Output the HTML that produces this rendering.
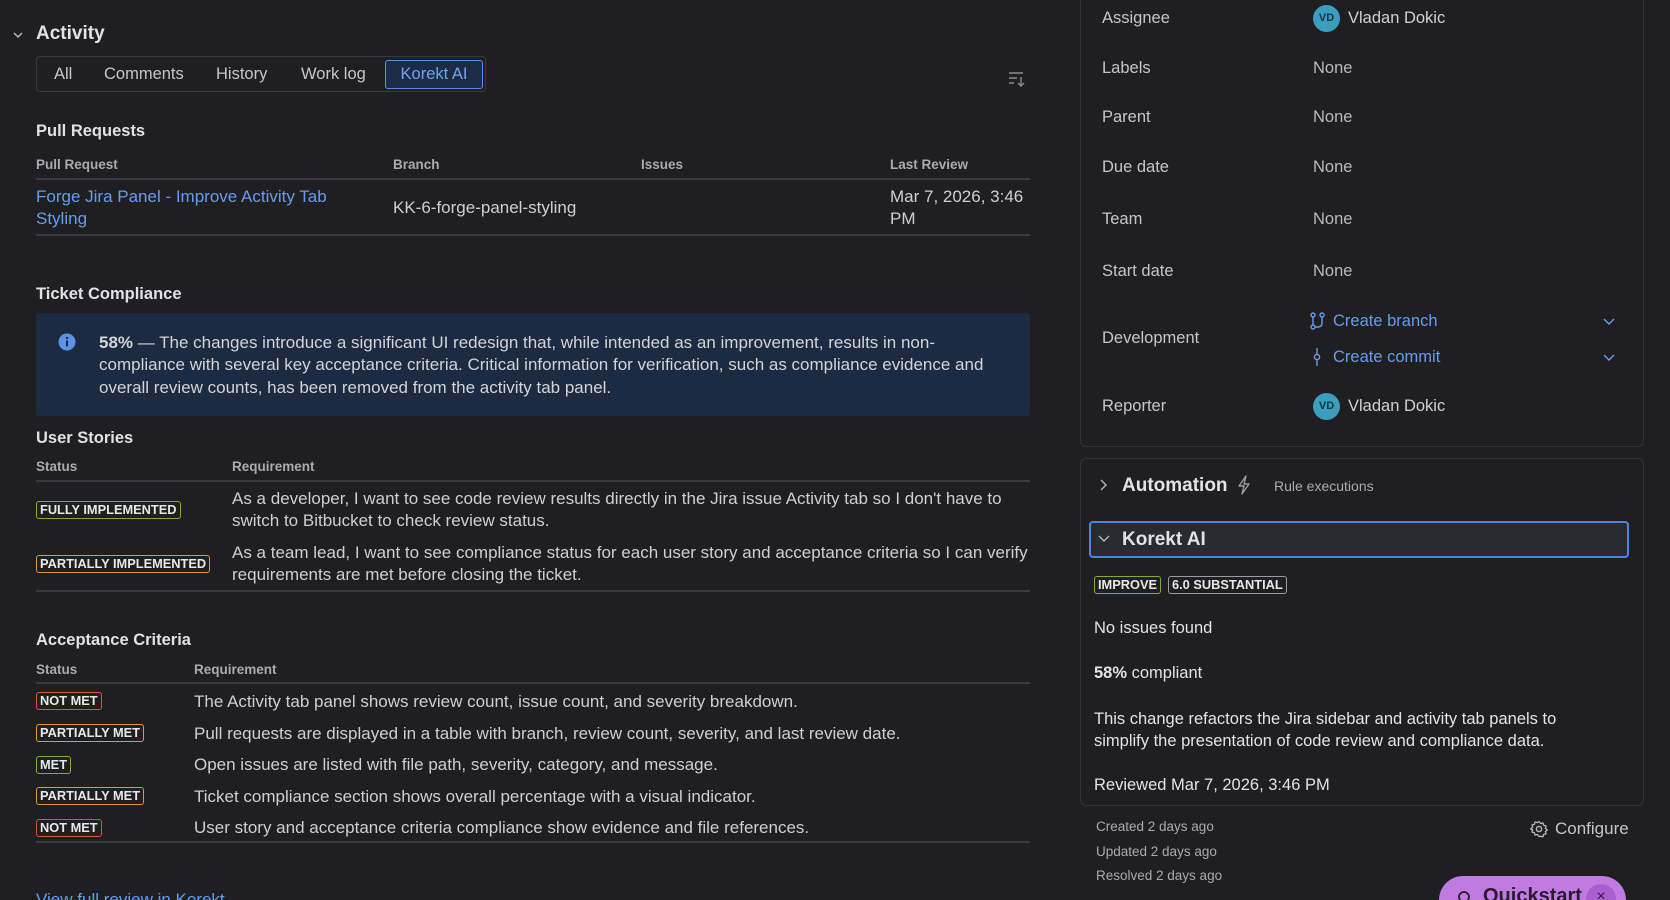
<!DOCTYPE html>
<html style="width:1670px;height:900px;overflow:hidden"><head><meta charset="utf-8"><style>
*{box-sizing:border-box;margin:0;padding:0}
html,body{overflow:hidden}
body{width:1670px;height:900px;background:#1f1f21;color:#cecfd2;font-family:"Liberation Sans",sans-serif;font-size:17px;position:relative;overflow:hidden}
.a{position:absolute;white-space:nowrap}
.h{font-weight:bold;color:#dfe1e5;font-size:16.5px}
.th{font-weight:bold;color:#a9abaf;font-size:13.5px}
.line{position:absolute;height:2px;background:#38393c}
.b{position:absolute;font-size:12.8px;font-weight:bold;color:#e8e8e8;border:1.5px solid;border-radius:3px;padding:1px 3px;line-height:14px;white-space:nowrap}
.g{border-color:#7fae3a}.o{border-color:#d99c3a}.r{border-color:#d6554b}.w{border-color:#9a9ca0}
.lab{position:absolute;left:1102px;color:#c4c6ca;font-size:16.5px}
.val{position:absolute;left:1313px;color:#b8babe;font-size:16.5px}
.av{display:inline-block;width:27px;height:27px;border-radius:50%;background:#3a9fbf;color:#16323c;font-size:11px;font-weight:bold;text-align:center;line-height:27px;vertical-align:middle;margin-right:8px}
.lnk{color:#669df1}
.tab{font-size:16.5px;color:#c4c6ca}
</style></head><body>
<svg class="a" style="left:11px;top:28px" width="14" height="14" viewBox="0 0 14 14"><path d="M3 5l4 4 4-4" stroke="#b6b8bc" stroke-width="1.5" fill="none"/></svg>
<div class="a" style="left:36px;top:23px;font-size:19px;font-weight:bold;color:#e2e3e6">Activity</div>
<div class="a" style="left:36px;top:56px;width:450px;height:36px;border:1.5px solid #38393c;border-radius:4px"></div>
<div class="a tab" style="left:54px;top:65px">All</div>
<div class="a tab" style="left:104px;top:65px">Comments</div>
<div class="a tab" style="left:216px;top:65px">History</div>
<div class="a tab" style="left:301px;top:65px">Work log</div>
<div class="a" style="left:385px;top:60px;width:98px;height:29px;border:1.5px solid #5a8fe0;background:#1d2b44;border-radius:3px;color:#6fa3f2;text-align:center;line-height:26px;font-size:16.5px">Korekt AI</div>
<svg class="a" style="left:1008px;top:71px" width="18" height="16" viewBox="0 0 18 16"><path d="M1 2h14M1 7h8M1 12h5M13 6v9M10 12l3 3 3-3" stroke="#8a8c90" stroke-width="1.4" fill="none"/></svg>

<div class="a h" style="left:36px;top:122px">Pull Requests</div>
<div class="a th" style="left:36px;top:157px">Pull Request</div>
<div class="a th" style="left:393px;top:157px">Branch</div>
<div class="a th" style="left:641px;top:157px">Issues</div>
<div class="a th" style="left:890px;top:157px">Last Review</div>
<div class="line" style="left:36px;top:178px;width:994px"></div>
<div class="a lnk" style="left:36px;top:186px;line-height:22.4px">Forge Jira Panel - Improve Activity Tab<br>Styling</div>
<div class="a" style="left:393px;top:198px">KK-6-forge-panel-styling</div>
<div class="a" style="left:890px;top:186px;line-height:22.4px">Mar 7, 2026, 3:46<br>PM</div>
<div class="line" style="left:36px;top:234px;width:994px"></div>

<div class="a h" style="left:36px;top:285px">Ticket Compliance</div>
<div class="a" style="left:36px;top:313px;width:994px;height:103px;background:#1c2a42;border-radius:3px"></div>
<svg class="a" style="left:58px;top:333px" width="18" height="18" viewBox="0 0 18 18"><circle cx="9" cy="9" r="8.5" fill="#5c93ea"/><rect x="8" y="7.5" width="2" height="6" fill="#1c2a42"/><circle cx="9" cy="5" r="1.2" fill="#1c2a42"/></svg>
<div class="a" style="left:99px;top:332px;line-height:22.4px;color:#d2d4d8"><b>58%</b> — The changes introduce a significant UI redesign that, while intended as an improvement, results in non-<br>compliance with several key acceptance criteria. Critical information for verification, such as compliance evidence and<br>overall review counts, has been removed from the activity tab panel.</div>

<div class="a h" style="left:36px;top:429px">User Stories</div>
<div class="a th" style="left:36px;top:459px">Status</div>
<div class="a th" style="left:232px;top:459px">Requirement</div>
<div class="line" style="left:36px;top:480px;width:994px"></div>
<div class="b g" style="left:36px;top:501px">FULLY IMPLEMENTED</div>
<div class="a" style="left:232px;top:488px;line-height:22.4px">As a developer, I want to see code review results directly in the Jira issue Activity tab so I don't have to<br>switch to Bitbucket to check review status.</div>
<div class="b o" style="left:36px;top:555px">PARTIALLY IMPLEMENTED</div>
<div class="a" style="left:232px;top:542px;line-height:22.4px">As a team lead, I want to see compliance status for each user story and acceptance criteria so I can verify<br>requirements are met before closing the ticket.</div>
<div class="line" style="left:36px;top:590px;width:994px"></div>

<div class="a h" style="left:36px;top:631px">Acceptance Criteria</div>
<div class="a th" style="left:36px;top:662px">Status</div>
<div class="a th" style="left:194px;top:662px">Requirement</div>
<div class="line" style="left:36px;top:682px;width:994px"></div>
<div class="b r" style="left:36px;top:692px">NOT MET</div>
<div class="a" style="left:194px;top:692px">The Activity tab panel shows review count, issue count, and severity breakdown.</div>
<div class="b o" style="left:36px;top:724px">PARTIALLY MET</div>
<div class="a" style="left:194px;top:724px">Pull requests are displayed in a table with branch, review count, severity, and last review date.</div>
<div class="b g" style="left:36px;top:756px">MET</div>
<div class="a" style="left:194px;top:755px">Open issues are listed with file path, severity, category, and message.</div>
<div class="b o" style="left:36px;top:787px">PARTIALLY MET</div>
<div class="a" style="left:194px;top:787px">Ticket compliance section shows overall percentage with a visual indicator.</div>
<div class="b r" style="left:36px;top:819px">NOT MET</div>
<div class="a" style="left:194px;top:818px">User story and acceptance criteria compliance show evidence and file references.</div>
<div class="line" style="left:36px;top:841px;width:994px"></div>
<div class="a lnk" style="left:36px;top:890px">View full review in Korekt</div>

<!-- right panel -->
<div class="a" style="left:1080px;top:-10px;width:564px;height:457px;border:1.5px solid #313236;border-radius:6px"></div>
<div class="lab" style="top:9px">Assignee</div><div class="val" style="top:5px;color:#cfd1d4"><span class="av">VD</span>Vladan Dokic</div>
<div class="lab" style="top:59px">Labels</div><div class="val" style="top:59px">None</div>
<div class="lab" style="top:108px">Parent</div><div class="val" style="top:108px">None</div>
<div class="lab" style="top:158px">Due date</div><div class="val" style="top:158px">None</div>
<div class="lab" style="top:210px">Team</div><div class="val" style="top:210px">None</div>
<div class="lab" style="top:262px">Start date</div><div class="val" style="top:262px">None</div>
<div class="lab" style="top:329px">Development</div>
<svg class="a" style="left:1310px;top:312px" width="16" height="18" viewBox="0 0 16 18"><circle cx="3" cy="3" r="2" stroke="#669df1" stroke-width="1.4" fill="none"/><circle cx="3" cy="15" r="2" stroke="#669df1" stroke-width="1.4" fill="none"/><circle cx="12" cy="3" r="2" stroke="#669df1" stroke-width="1.4" fill="none"/><path d="M3 5v8M12 5v6q0 4-4 4H5" stroke="#669df1" stroke-width="1.4" fill="none"/></svg>
<div class="a lnk" style="left:1333px;top:312px;font-size:16.5px">Create branch</div>
<svg class="a" style="left:1311px;top:347px" width="12" height="20" viewBox="0 0 12 20"><circle cx="6" cy="10" r="2.6" stroke="#669df1" stroke-width="1.4" fill="none"/><path d="M6 1v6.4M6 12.6V19" stroke="#669df1" stroke-width="1.4"/></svg>
<div class="a lnk" style="left:1333px;top:348px;font-size:16.5px">Create commit</div>
<svg class="a" style="left:1602px;top:316px" width="14" height="10" viewBox="0 0 14 10"><path d="M2 3l5 5 5-5" stroke="#669df1" stroke-width="1.4" fill="none"/></svg>
<svg class="a" style="left:1602px;top:352px" width="14" height="10" viewBox="0 0 14 10"><path d="M2 3l5 5 5-5" stroke="#669df1" stroke-width="1.4" fill="none"/></svg>
<div class="lab" style="top:397px">Reporter</div><div class="val" style="top:393px;color:#cfd1d4"><span class="av">VD</span>Vladan Dokic</div>

<div class="a" style="left:1080px;top:458px;width:564px;height:348px;border:1.5px solid #313236;border-radius:6px"></div>
<svg class="a" style="left:1098px;top:478px" width="12" height="14" viewBox="0 0 12 14"><path d="M3 2l5 5-5 5" stroke="#b6b8bc" stroke-width="1.4" fill="none"/></svg>
<div class="a" style="left:1122px;top:475px;font-size:19px;font-weight:bold;color:#e2e3e6">Automation</div>
<svg class="a" style="left:1236px;top:475px" width="16" height="20" viewBox="0 0 16 20"><path d="M10 1L3 11h5l-2 8 7-10H8z" stroke="#9a9ca0" stroke-width="1.4" fill="none" stroke-linejoin="round"/></svg>
<div class="a" style="left:1274px;top:478px;font-size:14px;color:#a9abaf">Rule executions</div>
<div class="a" style="left:1089px;top:521px;width:540px;height:37px;border:2px solid #4c86e0;background:#2a2b30;border-radius:4px"></div>
<svg class="a" style="left:1097px;top:533px" width="14" height="12" viewBox="0 0 14 12"><path d="M2 3l5 5 5-5" stroke="#b6b8bc" stroke-width="1.4" fill="none"/></svg>
<div class="a" style="left:1122px;top:529px;font-size:19px;font-weight:bold;color:#e2e3e6">Korekt AI</div>
<div class="b g" style="left:1094px;top:576px">IMPROVE</div>
<div class="b w" style="left:1168px;top:576px">6.0 SUBSTANTIAL</div>
<div class="a" style="left:1094px;top:619px;color:#e2e3e6;font-size:16.5px">No issues found</div>
<div class="a" style="left:1094px;top:664px;color:#e2e3e6;font-size:16.5px"><b>58%</b> compliant</div>
<div class="a" style="left:1094px;top:708px;line-height:22.4px;color:#e2e3e6;font-size:16.5px">This change refactors the Jira sidebar and activity tab panels to<br>simplify the presentation of code review and compliance data.</div>
<div class="a" style="left:1094px;top:776px;color:#e2e3e6;font-size:16.5px">Reviewed Mar 7, 2026, 3:46 PM</div>

<div class="a" style="left:1096px;top:819px;font-size:13.5px;color:#a9abaf">Created 2 days ago</div>
<div class="a" style="left:1096px;top:844px;font-size:13.5px;color:#a9abaf">Updated 2 days ago</div>
<div class="a" style="left:1096px;top:868px;font-size:13.5px;color:#a9abaf">Resolved 2 days ago</div>
<svg class="a" style="left:1530px;top:820px" width="18" height="18" viewBox="0 0 18 18"><circle cx="9" cy="9" r="2.6" stroke="#b6b8bc" stroke-width="1.4" fill="none"/><path d="M9 1.5l1.6 2 2.4-.6.6 2.4 2.4.6-.6 2.4 2 1.6-2 1.6.6 2.4-2.4.6-.6 2.4-2.4-.6L9 16.5l-1.6-2-2.4.6-.6-2.4-2.4-.6.6-2.4L.6 9l2-1.6-.6-2.4 2.4-.6.6-2.4 2.4.6z" stroke="#b6b8bc" stroke-width="1.3" fill="none" stroke-linejoin="round"/></svg>
<div class="a" style="left:1555px;top:819px;color:#c4c6ca;font-size:17px">Configure</div>
<div class="a" style="left:1439px;top:876px;width:187px;height:24px;border-radius:25px 25px 0 0;background:#c07be0;overflow:hidden"></div>
<svg class="a" style="left:1456px;top:889px" width="16" height="11" viewBox="0 0 16 11"><circle cx="8" cy="8" r="5" stroke="#2a1a33" stroke-width="1.8" fill="none"/></svg>
<div class="a" style="left:1439px;top:876px;width:187px;height:24px;overflow:hidden"><div class="a" style="left:44px;top:9px;font-size:20px;font-weight:bold;color:#2a1a33">Quickstart</div><div class="a" style="left:147px;top:8px;width:30px;height:30px;border-radius:50%;background:#a95fcf;color:#2a1a33;text-align:center;line-height:26px;font-size:16px">×</div></div>
</body></html>
